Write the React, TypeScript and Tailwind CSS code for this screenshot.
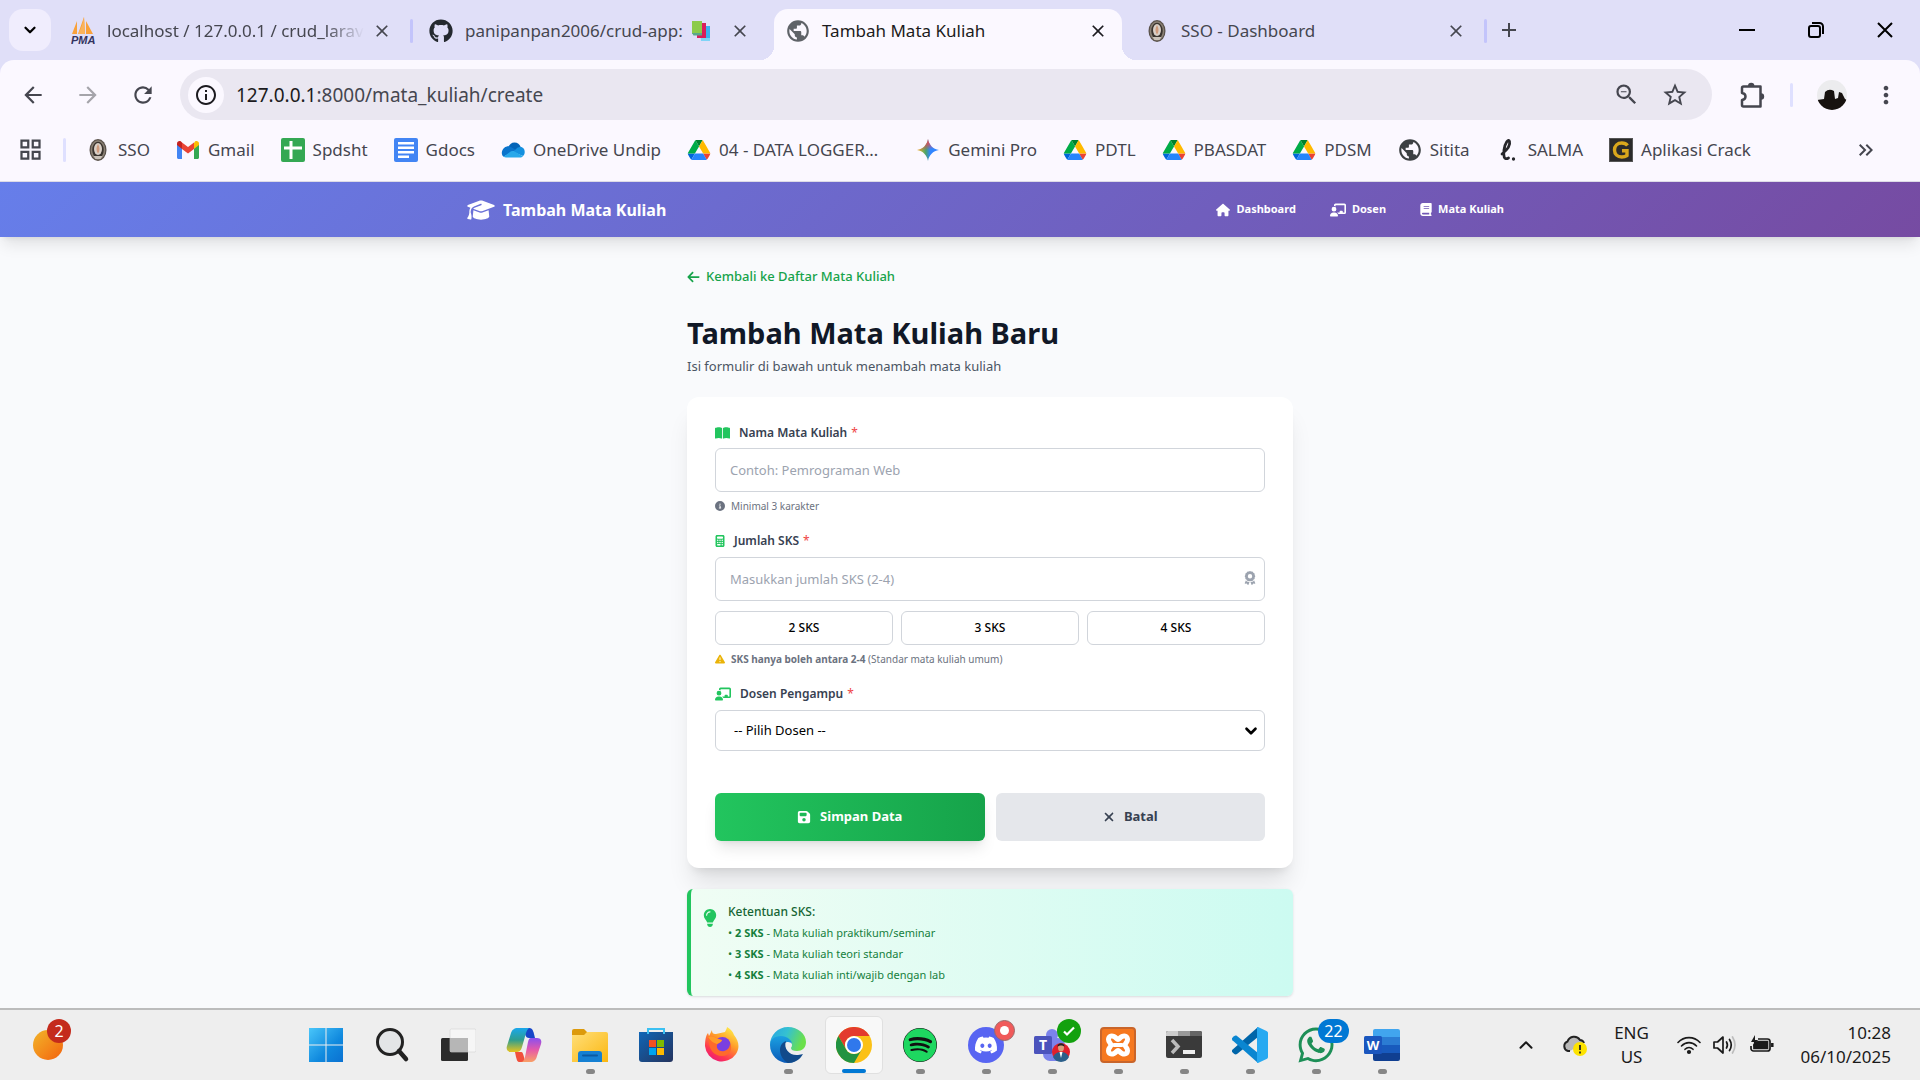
import { useId, useState } from "react";
import type { ReactNode } from "react";
import {
  FaArrowLeft,
  FaAward,
  FaBook,
  FaBookOpen,
  FaCalculator,
  FaChalkboardUser,
  FaCircleInfo,
  FaDiscord,
  FaFloppyDisk,
  FaGithub,
  FaGraduationCap,
  FaHouse,
  FaLightbulb,
  FaSpotify,
  FaTriangleExclamation,
  FaWhatsapp,
  FaXmark,
} from "react-icons/fa6";
import {
  MdAdd,
  MdArrowBack,
  MdArrowForward,
  MdClose,
  MdInfoOutline,
  MdKeyboardDoubleArrowRight,
  MdMoreVert,
  MdOutlineGridView,
  MdOutlineZoomOut,
  MdPublic,
  MdRefresh,
  MdStarBorder,
} from "react-icons/md";
import { SiXampp } from "react-icons/si";
import { ChevronDown, ChevronUp } from "lucide-react";

/* ---------- Favicons ---------- */

function PmaIcon() {
  return (
    <svg viewBox="0 0 24 28" className="h-7 w-6">
      <path d="M1 17 6 4v13zM7 17 13 0l1 17zM15 17 15 4l7 13z" fill="#f9a13a" />
      <path d="M13 0c-1 6-3 12-6 17h7z" fill="#fbb45c" />
      <text x="0" y="27" fontSize="11" fontWeight="700" fontStyle="italic" fontFamily="Liberation Sans, sans-serif" fill="#33335f">
        PMA
      </text>
    </svg>
  );
}

function CrestIcon() {
  return (
    <svg viewBox="0 0 20 24" className="h-6 w-5">
      <ellipse cx="10" cy="12" rx="8.500" ry="11" fill="#5a524b" />
      <ellipse cx="10" cy="12" rx="6.500" ry="9" fill="#3a342f" stroke="#8b8175" strokeWidth="1.500" />
      <ellipse cx="10" cy="11" rx="4" ry="6" fill="#d9cfc6" />
      <path d="M10 6c2 3 2 7 0 9.500-2-2.500-2-6.500 0-9.500z" fill="#cf9a7c" />
      <path d="M5.500 18h9l-2 3h-5z" fill="#c9c1b8" />
    </svg>
  );
}

function BooksIcon() {
  return (
    <svg viewBox="0 0 20 22" className="h-[22px] w-5 shrink-0">
      <path d="M9 6h10v15h-9z" fill="#3bb2f0" />
      <path d="M10 18h9v3h-9z" fill="#7fd4f7" />
      <path d="M6 3h9v15H6z" fill="#d91e5b" />
      <path d="M1 1h10v13H1z" fill="#8ccb4a" />
      <path d="M1 13h10v2.500H2.500z" fill="#5aa88a" />
    </svg>
  );
}

function GmailIcon() {
  return (
    <svg viewBox="0 0 24 20" className="h-5 w-6">
      <path d="M1 4v13.500c0 .8.700 1.500 1.500 1.500H6V8z" fill="#4285f4" />
      <path d="M23 4v13.500c0 .8-.7 1.500-1.500 1.500H18V8z" fill="#34a853" />
      <path d="M18 3v6l5-4V3.500C23 1.500 20.700.4 19 1.600z" fill="#fbbc04" />
      <path d="M6 9V2.500l6 4.500 6-4.500V9l-6 4.600z" fill="#ea4335" />
      <path d="M1 3.500V5l5 4V2.500L5 1.600C3.300.4 1 1.500 1 3.500z" fill="#c5221f" />
    </svg>
  );
}

function SheetsIcon() {
  return (
    <svg viewBox="0 0 24 24" className="h-6 w-6">
      <rect width="24" height="24" rx="2" fill="#34a853" />
      <path d="M8.500 3h3v5.500H21v3h-9.500V21h-3v-9.500H3v-3h5.500z" fill="#fff" />
    </svg>
  );
}

function DocsIcon() {
  return (
    <svg viewBox="0 0 24 24" className="h-6 w-6">
      <rect width="24" height="24" rx="2" fill="#4285f4" />
      <path d="M4 4h16v2.500H4zM4 8.500h16V11H4zM4 13h16v2.500H4zM4 17.500h11V20H4z" fill="#fff" />
    </svg>
  );
}

function OneDriveIcon() {
  return (
    <svg viewBox="0 0 24 16" className="h-4 w-6">
      <path d="M7 6C8 2.500 10.500.5 13.500.5c3 0 5.300 1.800 6.200 4.600L14 9z" fill="#0364b8" />
      <path d="M9 4.500C5.500 3.500 1.800 6 1 9.500c-.6 2 .2 4 1.500 5.200L15 8z" fill="#0a74cc" />
      <path d="M19.500 5c-2 0-3.700.8-5 2.500L12 10l10 4c3-2.600 2-9-2.500-9z" fill="#1490df" />
      <path d="M2.500 14.700C3.300 15.300 4.200 15.500 5 15.500h14c1.200 0 2.200-.5 3-1.300L13 9.300c-1.300-.5-3-.3-4 .6z" fill="#28a8ea" />
    </svg>
  );
}

function DriveIcon() {
  return (
    <svg viewBox="0 0 87 78" className="h-5 w-6">
      <path d="m6.600 66.850 3.850 6.650c.8 1.400 1.950 2.500 3.300 3.300l13.750-23.800h-27.500c0 1.550.4 3.100 1.200 4.500z" fill="#0066da" />
      <path d="m43.650 25-13.750-23.800c-1.350.8-2.500 1.900-3.300 3.300l-25.400 44a9.060 9.060 0 0 0 -1.200 4.500h27.500z" fill="#00ac47" />
      <path d="m73.550 76.800c1.350-.8 2.500-1.900 3.300-3.300l1.600-2.750 7.650-13.250c.8-1.400 1.200-2.950 1.200-4.500h-27.500l5.850 11.500z" fill="#ea4335" />
      <path d="m43.650 25 13.750-23.800c-1.350-.8-2.900-1.200-4.500-1.200h-18.500c-1.600 0-3.150.45-4.500 1.200z" fill="#00832d" />
      <path d="m59.800 53h-32.300l-13.750 23.800c1.350.8 2.900 1.200 4.500 1.200h50.800c1.600 0 3.150-.45 4.500-1.200z" fill="#2684fc" />
      <path d="m73.400 26.500-12.700-22c-.8-1.400-1.950-2.500-3.300-3.300l-13.750 23.800 16.150 28h27.450c0-1.550-.4-3.100-1.200-4.500z" fill="#ffba00" />
    </svg>
  );
}

function GeminiIcon() {
  return (
    <svg viewBox="0 0 24 24" className="h-6 w-6">
      <defs>
        <linearGradient id="gem" x1="0" y1="0.500" x2="1" y2="0.500">
          <stop offset="0" stopColor="#f5c518" />
          <stop offset=".4" stopColor="#4aa36c" />
          <stop offset=".6" stopColor="#3186ff" />
          <stop offset="1" stopColor="#3186ff" />
        </linearGradient>
        <linearGradient id="gemTop" x1="0.400" y1="0" x2="0.500" y2="0.500">
          <stop offset="0" stopColor="#f0454a" />
          <stop offset=".5" stopColor="#f0454a" stopOpacity=".7" />
          <stop offset="1" stopColor="#f0454a" stopOpacity="0" />
        </linearGradient>
      </defs>
      <path d="M12 1c1 6 5 10 11 11-6 1-10 5-11 11-1-6-5-10-11-11 6-1 10-5 11-11z" fill="url(#gem)" />
      <path d="M12 1c1 6 5 10 11 11-6 1-10 5-11 11-1-6-5-10-11-11 6-1 10-5 11-11z" fill="url(#gemTop)" />
    </svg>
  );
}

function ScriptLIcon() {
  return (
    <svg viewBox="0 0 16 24" className="h-6 w-4" fill="none" stroke="#26262a" strokeLinecap="round">
      <path d="M2 16C7 12 10.500 7 9.500 3.500 8.500 0 5 5 4 12c-.8 6 0 10.500 4.500 8" strokeWidth="2.800" />
      <circle cx="13.500" cy="21" r=".9" fill="#26262a" strokeWidth="1.500" />
    </svg>
  );
}

function GIcon() {
  return (
    <svg viewBox="0 0 24 24" className="h-6 w-6">
      <rect x=".5" y=".5" width="23" height="23" fill="#2b2b2b" stroke="#555" />
      <path d="M18.500 7.500C17 5.500 15 5 12.800 5 8.500 5 5.500 7.800 5.500 12s3 7 7.300 7c2 0 3.800-.5 5.200-1.500V12.700h-5" fill="none" stroke="#d9a71c" strokeWidth="3.400" />
    </svg>
  );
}

function PuzzleIcon() {
  return (
    <svg viewBox="0 0 28 28" className="size-7">
      <path
        d="M5.500 5.500h17v20h-17a1.500 1.500 0 0 1-1.500-1.500V19q3.500-.5 3.500-3.500T4 12V7a1.500 1.500 0 0 1 1.500-1.500z"
        fill="none"
        stroke="currentColor"
        strokeWidth="2.500"
        strokeLinejoin="round"
      />
      <path d="M10 5a3.200 3.200 0 0 1 6.400 0zM23 12.300a3.200 3.200 0 0 1 0 6.400z" fill="currentColor" />
    </svg>
  );
}

/* ---------- Browser chrome ---------- */

type Tab = { title: string; icon: ReactNode; active?: boolean; divider?: boolean; faded?: boolean; extra?: ReactNode };

const tabs: Tab[] = [
  { title: "localhost / 127.0.0.1 / crud_larav", icon: <PmaIcon />, divider: true, faded: true },
  { title: "panipanpan2006/crud-app:", icon: <FaGithub className="size-6 text-[#24292f]" />, extra: <BooksIcon /> },
  { title: "Tambah Mata Kuliah", icon: <MdPublic className="size-[26px] shrink-0 text-[#5f6368]" />, active: true },
  { title: "SSO - Dashboard", icon: <CrestIcon />, divider: true },
];

function BrowserTab({ tab }: { tab: Tab }) {
  return (
    <div className="flex h-[51px] w-[358px] min-w-0 items-stretch">
      <div
        className={
          tab.active
            ? "relative flex min-w-0 flex-1 items-center rounded-t-[14px] bg-[#fbf8ff] pr-[14px] pb-2 pl-3 text-[#1c1b20]"
            : "relative flex min-w-0 flex-1 items-center pr-[14px] pb-2 pl-[13px] text-[#45464f]"
        }
      >
        {tab.active && (
          <>
            <span className="absolute bottom-0 -left-[14px] size-[14px] bg-[radial-gradient(circle_at_0_0,transparent_14px,#fbf8ff_14px)]" />
            <span className="absolute -right-[14px] bottom-0 size-[14px] bg-[radial-gradient(circle_at_100%_0,transparent_14px,#fbf8ff_14px)]" />
          </>
        )}
        <span className="flex w-6 shrink-0 justify-center">{tab.icon}</span>
        <span
          className={
            tab.faded
              ? "ml-3 flex min-w-0 flex-1 items-center gap-2 [mask-image:linear-gradient(to_right,black_85%,transparent)]"
              : "ml-3 flex min-w-0 flex-1 items-center gap-2"
          }
        >
          <span className="text-[17px] leading-6 whitespace-nowrap">{tab.title}</span>
          {tab.extra}
        </span>
        <button type="button" aria-label={"Close " + tab.title} className="ml-2 shrink-0">
          <MdClose className="size-5" />
        </button>
      </div>
      <div className="flex w-[10px] items-center justify-center pb-2">
        {tab.divider && <span className="h-6 w-[3px] rounded bg-[#c3c4fb]" />}
      </div>
    </div>
  );
}

function TabStrip() {
  return (
    <div className="flex h-[60px] items-end bg-[#e0dff8]">
      <div className="flex h-[51px] w-[58px] shrink-0 items-start pl-[9px]">
        <button type="button" aria-label="Search tabs" className="flex h-[42px] w-[42px] items-center justify-center rounded-[14px] bg-[#f0edfd]">
          <ChevronDown className="size-[18px]" strokeWidth={3} />
        </button>
      </div>
      {tabs.map((tab) => (
        <BrowserTab key={tab.title} tab={tab} />
      ))}
      <div className="flex h-[51px] flex-1 items-center justify-between pr-[26px] pb-[10px] pl-[7px]">
        <button type="button" aria-label="New tab" className="text-[#45464f]">
          <MdAdd className="size-6" />
        </button>
        <div className="flex items-center gap-[51px]">
          <button type="button" aria-label="Minimize" className="flex size-[18px] items-center justify-center">
            <span className="h-[2px] w-4 bg-black" />
          </button>
          <button type="button" aria-label="Restore" className="flex size-[18px] items-center justify-center">
            <svg viewBox="0 0 18 18" className="size-[18px]" fill="none" stroke="#000" strokeWidth="2">
              <rect x="2" y="5" width="11" height="11" rx="2" />
              <path d="M5 2h7.500A3.500 3.500 0 0 1 16 5.500V13" />
            </svg>
          </button>
          <button type="button" aria-label="Close window" className="flex size-[18px] items-center justify-center">
            <svg viewBox="0 0 18 18" className="size-[18px]" stroke="#000" strokeWidth="2">
              <path d="M2 2l14 14M16 2L2 16" />
            </svg>
          </button>
        </div>
      </div>
    </div>
  );
}

function Toolbar() {
  return (
    <div className="flex h-[69px] items-center rounded-t-[14px] bg-[#fbf8ff] pr-5 pl-5 text-[#45464f]">
      <div className="flex w-40 shrink-0 items-center gap-[29px]">
        <button type="button" aria-label="Back">
          <MdArrowBack className="size-[26px]" />
        </button>
        <button type="button" aria-label="Forward" className="text-[#a5a4aa]">
          <MdArrowForward className="size-[26px]" />
        </button>
        <button type="button" aria-label="Reload">
          <MdRefresh className="size-[26px]" />
        </button>
      </div>
      <div className="flex h-[51px] flex-1 items-center rounded-full bg-[#eae7f1] pr-[23px] pl-2">
        <button type="button" aria-label="Site information" className="flex size-9 items-center justify-center rounded-full bg-[#fbf8ff] text-[#1c1b20]">
          <MdInfoOutline className="size-6" />
        </button>
        <span className="ml-3 flex-1 text-[19px] leading-7">
          <span className="text-[#1c1b20]">127.0.0.1</span>:8000/mata_kuliah/create
        </span>
        <button type="button" aria-label="Zoom">
          <MdOutlineZoomOut className="size-[27px]" />
        </button>
        <button type="button" aria-label="Bookmark" className="ml-[21px]">
          <MdStarBorder className="size-[28px]" />
        </button>
      </div>
      <div className="flex items-center pl-[26px]">
        <button type="button" aria-label="Extensions">
          <PuzzleIcon />
        </button>
        <span className="ml-6 h-6 w-[3px] rounded bg-[#dfe0ff]" />
        <button type="button" aria-label="Profile" className="ml-6">
          <svg viewBox="0 0 30 30" className="size-[30px]">
            <clipPath id="avatar">
              <circle cx="15" cy="15" r="15" />
            </clipPath>
            <g clipPath="url(#avatar)">
              <rect width="30" height="30" fill="#ececee" />
              <path d="M0 20l7-1 1-7q4-4 9-1l1 8 3-1 1-6 3 1 3 6 2 1v12H0z" fill="#17120f" />
            </g>
          </svg>
        </button>
        <button type="button" aria-label="Menu" className="ml-[25px]">
          <MdMoreVert className="size-[28px]" />
        </button>
      </div>
    </div>
  );
}

const bookmarks: { label: string; icon: ReactNode; long?: boolean }[] = [
  { label: "SSO", icon: <CrestIcon /> },
  { label: "Gmail", icon: <GmailIcon /> },
  { label: "Spdsht", icon: <SheetsIcon /> },
  { label: "Gdocs", icon: <DocsIcon /> },
  { label: "OneDrive Undip", icon: <OneDriveIcon /> },
  { label: "04 - DATA LOGGER…", icon: <DriveIcon />, long: true },
  { label: "Gemini Pro", icon: <GeminiIcon /> },
  { label: "PDTL", icon: <DriveIcon /> },
  { label: "PBASDAT", icon: <DriveIcon /> },
  { label: "PDSM", icon: <DriveIcon /> },
  { label: "Sitita", icon: <MdPublic className="size-[26px] shrink-0 text-[#3c4043]" /> },
  { label: "SALMA", icon: <ScriptLIcon /> },
  { label: "Aplikasi Crack", icon: <GIcon /> },
];

function BookmarksBar() {
  return (
    <div className="flex h-[53px] items-center border-b border-[#dddbe6] bg-[#fbf8ff] pr-[42px] pb-[11px] pl-[17px] text-[#45464f]">
      <button type="button" aria-label="All bookmarks">
        <MdOutlineGridView className="size-[27px]" />
      </button>
      <span className="ml-[19px] h-6 w-[3px] rounded bg-[#dfe0ff]" />
      <nav aria-label="Bookmarks" className="ml-5 flex flex-1 items-center gap-[26px]">
        {bookmarks.map((b) => (
          <a
            key={b.label}
            href="#"
            className={
              b.long
                ? "flex items-center gap-2 pr-3 text-[17px] leading-6 whitespace-nowrap"
                : "flex items-center gap-2 text-[17px] leading-6 whitespace-nowrap"
            }
          >
            <span className="flex w-6 justify-center">{b.icon}</span>
            {b.label}
          </a>
        ))}
      </nav>
      <button type="button" aria-label="More bookmarks">
        <MdKeyboardDoubleArrowRight className="size-6" />
      </button>
    </div>
  );
}

/* ---------- Web page ---------- */

function SiteNav() {
  return (
    <header className="relative bg-[linear-gradient(135deg,#667eea_0%,#764ba2_100%)] pl-[51px] text-white shadow-lg">
      <div className="mx-auto flex h-[55px] max-w-[1037px] items-center justify-between">
        <div className="flex items-center gap-2">
          <FaGraduationCap className="h-[22px] w-7" />
          <span className="text-base font-bold">Tambah Mata Kuliah</span>
        </div>
        <nav className="flex items-center gap-[34px] text-[11px] font-bold">
          <a href="#" className="flex items-center gap-[6px]">
            <FaHouse className="size-[14px]" />
            Dashboard
          </a>
          <a href="#" className="flex items-center gap-[6px]">
            <FaChalkboardUser className="h-[14px] w-4" />
            Dosen
          </a>
          <a href="#" className="flex items-center gap-[6px]">
            <FaBook className="h-[13px] w-3" />
            Mata Kuliah
          </a>
        </nav>
      </div>
    </header>
  );
}

function FieldLabel({ htmlFor, icon, children }: { htmlFor: string; icon: ReactNode; children: ReactNode }) {
  return (
    <label htmlFor={htmlFor} className="flex h-4 items-center text-xs font-semibold text-[#374151]">
      <span className="mr-[9px] text-[#22c55e]">{icon}</span>
      {children}
      <span className="ml-1 font-normal text-[#ef4444]">*</span>
    </label>
  );
}

const sksOptions = [2, 3, 4];

const sksRules = [
  { sks: "2 SKS", text: "Mata kuliah praktikum/seminar" },
  { sks: "3 SKS", text: "Mata kuliah teori standar" },
  { sks: "4 SKS", text: "Mata kuliah inti/wajib dengan lab" },
];

function CourseForm() {
  const id = useId();
  const [sks, setSks] = useState("");
  return (
    <form
      className="rounded-xl bg-white px-7 pt-7 pb-[27px] shadow-xl"
      onSubmit={(e) => e.preventDefault()}
    >
      <FieldLabel htmlFor={id + "nama"} icon={<FaBookOpen className="h-[14px] w-[15px]" />}>
        Nama Mata Kuliah
      </FieldLabel>
      <input
        id={id + "nama"}
        type="text"
        placeholder="Contoh: Pemrograman Web"
        className="mt-[7px] block h-11 w-full rounded-md border border-[#d1d5db] px-[14px] text-[13px] placeholder:text-[#9ca3af]"
      />
      <p className="mt-[6px] flex h-4 items-center gap-[6px] text-[10px] text-[#6b7280]">
        <FaCircleInfo className="size-[10px]" />
        Minimal 3 karakter
      </p>

      <div className="mt-[19px]">
        <FieldLabel htmlFor={id + "sks"} icon={<FaCalculator className="h-3 w-[10px]" />}>
          Jumlah SKS
        </FieldLabel>
        <div className="relative mt-2">
          <input
            id={id + "sks"}
            type="text"
            inputMode="numeric"
            value={sks}
            onChange={(e) => setSks(e.target.value)}
            placeholder="Masukkan jumlah SKS (2-4)"
            className="block h-11 w-full rounded-md border border-[#d1d5db] px-[14px] text-[13px] placeholder:text-[#9ca3af]"
          />
          <FaAward className="absolute top-[14px] right-[9px] h-[14px] w-3 text-[#9ca3af]" />
        </div>
        <div className="mt-[10px] grid grid-cols-3 gap-2">
          {sksOptions.map((n) => (
            <button
              key={n}
              type="button"
              onClick={() => setSks(String(n))}
              className="h-[34px] rounded-md border border-[#d1d5db] text-xs font-medium text-black"
            >
              {n} SKS
            </button>
          ))}
        </div>
        <p className="mt-[6px] flex h-4 items-center text-[10px] text-[#6b7280]">
          <FaTriangleExclamation className="mr-[6px] size-[10px] text-[#eab308]" />
          <span>
            <strong>SKS hanya boleh antara 2-4</strong> (Standar mata kuliah umum)
          </span>
        </p>
      </div>

      <div className="mt-[19px]">
        <FieldLabel htmlFor={id + "dosen"} icon={<FaChalkboardUser className="h-[14px] w-4" />}>
          Dosen Pengampu
        </FieldLabel>
        <div className="relative mt-2">
          <select
            id={id + "dosen"}
            className="block h-[41px] w-full appearance-none rounded-md border border-[#d1d5db] bg-white px-[18px] text-[13px] text-black"
          >
            <option>-- Pilih Dosen --</option>
          </select>
          <ChevronDown className="pointer-events-none absolute top-3 right-[5px] size-[18px]" strokeWidth={3.500} />
        </div>
      </div>

      <div className="mt-[42px] grid grid-cols-2 gap-[11px]">
        <button
          type="submit"
          className="flex h-12 items-center justify-center gap-[9px] rounded-md bg-linear-to-r from-[#22c55e] to-[#16a34a] text-[13px] font-bold text-white shadow-lg"
        >
          <FaFloppyDisk className="size-[14px]" />
          Simpan Data
        </button>
        <button
          type="button"
          className="flex h-12 items-center justify-center gap-[9px] rounded-md bg-[#e5e7eb] text-[13px] font-bold text-[#374151]"
        >
          <FaXmark className="h-[14px] w-3" />
          Batal
        </button>
      </div>
    </form>
  );
}

function SitePage() {
  return (
    <div className="flex-1 overflow-hidden bg-[#f9fafc]">
      <SiteNav />
      <div className="pl-[60px]">
        <main className="mx-auto flex max-w-[606px] flex-col pt-[31px] pb-[11px]">
          <a href="#" className="flex h-[18px] items-center gap-[6px] text-[13px] font-medium text-[#16a34a]">
            <FaArrowLeft className="h-[14px] w-[13px]" />
            Kembali ke Daftar Mata Kuliah
          </a>
          <h1 className="mt-[27px] text-[29px] leading-10 font-bold text-[#111827]">Tambah Mata Kuliah Baru</h1>
          <p className="mt-1 mb-[22px] text-[13px] leading-[18px] text-[#4b5563]">
            Isi formulir di bawah untuk menambah mata kuliah
          </p>
          <CourseForm />
          <section className="mt-[21px] flex rounded-md border-l-4 border-[#22c55e] bg-linear-to-r from-[#f0fdf4] to-[#ccfbf1] px-3 pt-3 pb-[11px] shadow">
            <FaLightbulb className="mt-2 h-[18px] w-[14px] shrink-0 text-[#22c55e]" />
            <div className="ml-[11px] text-[11px] leading-[21px] text-[#15803d]">
              <h2 className="text-xs leading-[21px] font-medium text-[#166534]">Ketentuan SKS:</h2>
              <ul>
                {sksRules.map((r) => (
                  <li key={r.sks}>
                    • <strong>{r.sks}</strong> - {r.text}
                  </li>
                ))}
              </ul>
            </div>
          </section>
        </main>
      </div>
    </div>
  );
}

/* ---------- Taskbar ---------- */

function WindowsIcon() {
  return (
    <svg viewBox="0 0 36 36" className="size-9">
      <defs>
        <linearGradient id="win" gradientUnits="userSpaceOnUse" x1="0" y1="0" x2="36" y2="36">
          <stop offset="0" stopColor="#4cc9fb" />
          <stop offset=".6" stopColor="#1089de" />
          <stop offset="1" stopColor="#0a6fd0" />
        </linearGradient>
      </defs>
      <path d="M1 1h16.500v16.500H1zM18.500 1H35v16.500H18.500zM1 18.500h16.500V35H1zM18.500 18.500H35V35H18.500z" fill="url(#win)" />
    </svg>
  );
}

function SearchIcon() {
  return (
    <svg viewBox="0 0 36 36" className="size-9" fill="none" stroke="#222">
      <circle cx="16" cy="15" r="12.500" strokeWidth="3" fill="#e3e5e7" />
      <path d="M25 24l7 8" strokeWidth="4.500" strokeLinecap="round" />
    </svg>
  );
}

function TaskViewIcon() {
  return (
    <svg viewBox="0 0 36 36" className="size-9">
      <rect x="1" y="11" width="27" height="23" rx="1.500" fill="#2b2b2b" />
      <rect x="10" y="2" width="26" height="23" rx="1.500" fill="#f6f6f6" stroke="#d4d4d4" strokeWidth=".6" />
      <path d="M10 11h18v14H10z" fill="#b6b6b6" />
    </svg>
  );
}

function CopilotIcon() {
  return (
    <svg viewBox="0 0 36 36" className="size-9">
      <defs>
        <linearGradient id="copL" x1="0" y1="0" x2="0" y2="1">
          <stop offset="0" stopColor="#1aa7ec" />
          <stop offset=".5" stopColor="#2f9e8f" />
          <stop offset="1" stopColor="#e9c41c" />
        </linearGradient>
        <linearGradient id="copR" x1="0" y1="0" x2="0" y2="1">
          <stop offset="0" stopColor="#8a4ff0" />
          <stop offset=".5" stopColor="#e65aa8" />
          <stop offset="1" stopColor="#f9a066" />
        </linearGradient>
      </defs>
      <path d="M17 1h6c3 0 4 2 5 6l1 4h-6c-2 0-3-1-4-4z" fill="#1746c8" />
      <path d="M9 25h6c2 0 2 2 3 5l1 5h-5c-3 0-3-2-4-5z" fill="#f1503c" />
      <path d="M12 1h12c-2 0-3 2-4 5l-4 14c-1 4-3 5-6 5H5c-4 0-5-3-4-6L5 6c1-3 3-5 7-5z" fill="url(#copL)" />
      <path d="M25 11h6c4 0 5 3 4 6l-4 12c-1 4-3 6-7 6h-9c2 0 3-2 4-5l3-15c1-3 1-4 3-4z" fill="url(#copR)" />
    </svg>
  );
}

function ExplorerIcon() {
  return (
    <svg viewBox="0 0 36 36" className="size-9">
      <defs>
        <linearGradient id="fold" x1="0" y1="0" x2="1" y2="1">
          <stop offset="0" stopColor="#ffdf7a" />
          <stop offset="1" stopColor="#fbb710" />
        </linearGradient>
      </defs>
      <path d="M0 4a2 2 0 0 1 2-2h10l4 4v6H0z" fill="#dc9a0c" />
      <path d="M0 8h12l3-3h19a2 2 0 0 1 2 2v28H0z" fill="url(#fold)" />
      <path d="M6 35V27a3 3 0 0 1 3-3h18a3 3 0 0 1 3 3v8z" fill="#1580d3" />
      <path d="M11 28.500h14" stroke="#0b5aa3" strokeWidth="2" strokeLinecap="round" />
    </svg>
  );
}

function StoreIcon() {
  return (
    <svg viewBox="0 0 36 36" className="size-9">
      <defs>
        <linearGradient id="store" x1="0" y1="0" x2="1" y2="1">
          <stop offset="0" stopColor="#0f66b7" />
          <stop offset="1" stopColor="#25335d" />
        </linearGradient>
      </defs>
      <path d="M1 5h34v27a3 3 0 0 1-3 3H4a3 3 0 0 1-3-3z" fill="url(#store)" />
      <path d="M10 7V2h16v5" fill="none" stroke="#3bc0f2" strokeWidth="2" />
      <path d="M11 13h7v7h-7z" fill="#f25022" />
      <path d="M19 13h7v7h-7z" fill="#7fba00" />
      <path d="M11 21h7v7h-7z" fill="#00a4ef" />
      <path d="M19 21h7v7h-7z" fill="#ffb900" />
    </svg>
  );
}

function FirefoxIcon() {
  return (
    <svg viewBox="0 0 36 36" className="size-9">
      <defs>
        <linearGradient id="ff" x1=".8" y1="0" x2=".2" y2="1">
          <stop offset="0" stopColor="#fff04a" />
          <stop offset=".4" stopColor="#ff9b28" />
          <stop offset=".75" stopColor="#ff3750" />
          <stop offset="1" stopColor="#e8167e" />
        </linearGradient>
      </defs>
      <path d="M21 5c1-2 2-4 2-5 4 2 6 5 7 8 5 6 6 13 2 19A17 17 0 0 1 1 19C1 13 2 8 4 6l1 3 3-6c0 3 1 4 4 4 3-1 6-1 9-2z" fill="url(#ff)" />
      <circle cx="18.500" cy="18" r="8" fill="#7a3fe0" />
      <path d="M4 10c4-2 7 0 10 2l4 1c-1 3-4 3-5 5-1 4 3 7 7 6 4-1 6-4 6-8 3 6 0 13-8 13S5 22 5 15z" fill="#ff6a2a" />
      <path d="M4 10c4-2 7 0 10 2l4 1c-1 3-4 3-5 4-4-1-6-3-9-7z" fill="#ff9b28" />
    </svg>
  );
}

function EdgeIcon() {
  return (
    <svg viewBox="0 0 36 36" className="size-9">
      <defs>
        <linearGradient id="edgeTop" x1="0" y1="0" x2="1" y2=".3">
          <stop offset="0" stopColor="#26a4e4" />
          <stop offset=".5" stopColor="#35c1d1" />
          <stop offset="1" stopColor="#6be04b" />
        </linearGradient>
        <linearGradient id="edgeLeft" x1="0" y1="0" x2="0" y2="1">
          <stop offset="0" stopColor="#1ba0e1" />
          <stop offset="1" stopColor="#0a5ab8" />
        </linearGradient>
      </defs>
      <path d="M0 18C0 8 8 0 18 0s18 7 18 15c0 6-4 9-9 9-4 0-6-1-6-3 0-1 1-1 1-3 0-4-4-8-10-8C6 10 1 13 0 18z" fill="url(#edgeTop)" />
      <path d="M0 18c0-5 4-9 11-9 6 0 11 4 11 8-2-3-9-3-9 4 0 7 6 12 12 13-2 1-4 2-7 2C8 36 0 28 0 18z" fill="url(#edgeLeft)" />
      <path d="M10 23c0-5 3-8 6-9-3 8 4 15 12 14 2 0 4-1 5-1-3 6-9 9-15 9-4-2-8-7-8-13z" fill="#114a8b" />
    </svg>
  );
}

function ChromeIcon() {
  return (
    <svg viewBox="0 0 36 36" className="size-9">
      <circle cx="18" cy="18" r="18" fill="#fbc116" />
      <path d="M2.400 9A18 18 0 0 1 33.600 9H18a9 9 0 0 0-7.800 13.500z" fill="#e33b2e" />
      <path d="M2.400 9A18 18 0 0 0 18 36l7.800-13.500A9 9 0 0 1 10.200 22.500z" fill="#229342" />
      <circle cx="18" cy="18" r="9" fill="#fff" />
      <circle cx="18" cy="18" r="7" fill="#3078ec" />
    </svg>
  );
}

function SpotifyIcon() {
  return (
    <span className="flex size-[34px] items-center justify-center rounded-full bg-[#111]">
      <FaSpotify className="size-[34px] text-[#1ed760]" />
    </span>
  );
}

function DiscordIcon() {
  return (
    <span className="flex size-9 items-center justify-center rounded-full bg-[#5865f2]">
      <FaDiscord className="size-6 text-white" />
    </span>
  );
}

function TeamsIcon() {
  return (
    <svg viewBox="0 0 36 36" className="size-9">
      <circle cx="18" cy="8" r="6" fill="#7b83eb" />
      <rect x="9" y="11" width="22" height="23" rx="7" fill="#7b83eb" />
      <rect x="0" y="9" width="18" height="18" rx="1.500" fill="#4b53bc" />
      <text x="9" y="23" textAnchor="middle" fontSize="14" fontWeight="700" fontFamily="Noto Sans, sans-serif" fill="#fff">
        T
      </text>
      <circle cx="27" cy="25" r="9" fill="#e0202b" />
      <path d="M19 30c2-4 5-5 8-5s6 1 8 5a9 9 0 0 1-16 0z" fill="#2b5f8a" />
      <path d="M25.500 25h3l-1.500 6z" fill="#fff" />
      <ellipse cx="27" cy="20.500" rx="3" ry="4" fill="#d9a07c" />
      <path d="M23.500 20c-.5-5 7.500-5 7 0-1-2-6-2-7 0z" fill="#222" />
    </svg>
  );
}

function XamppIcon() {
  return (
    <span className="flex size-9 items-center justify-center rounded-[4px] border-2 border-[#c9652a] bg-[#f6781f]">
      <svg viewBox="0 0 26 26" className="size-[26px]" fill="none" stroke="#fff" strokeWidth="5" strokeLinejoin="round" strokeLinecap="round">
        <path d="M9 4.500c-3-1.500-5.500 0-5.500 3S6 11 6 13s-2.500 2.500-2.500 5.500 2.500 4.500 5.500 3 2.500-3 4-3 1 1.500 4 3 5.500 0 5.500-3S20 15 20 13s2.500-2.500 2.500-5.500-2.500-4.500-5.500-3-2.500 3-4 3-1-1.500-4-3z" />
        <path d="M9 13h8" strokeWidth="4" />
      </svg>
    </span>
  );
}

function TerminalIcon() {
  return (
    <svg viewBox="0 0 36 36" className="size-9">
      <rect y="4" width="36" height="27" rx="2" fill="#3a3a3a" />
      <path d="M0 9V6a2 2 0 0 1 2-2h10v5z" fill="#ccc" />
      <path d="M12 4h12v5H12z" fill="#999" />
      <path d="M24 4h10a2 2 0 0 1 2 2v3H24z" fill="#666" />
      <path d="M6 13l6 6.500L6 26" fill="none" stroke="#bbb" strokeWidth="3.500" />
      <path d="M17 23h12v4H17z" fill="#eee" />
    </svg>
  );
}

function VsCodeIcon() {
  return (
    <svg viewBox="0 0 36 36" className="size-9">
      <path d="M26 0v10L5 27c-1 .7-2 .6-3-.2l-1.600-1.500c-.7-.7-.7-1.800 0-2.500z" fill="#0065a9" />
      <path d="M26 36V26L5 9C4 8.300 3 8.400 2 9.200L.4 10.700c-.7.7-.7 1.800 0 2.500z" fill="#0a86d1" />
      <path d="M26 0l8.500 4c1 .5 1.500 1.200 1.500 2.300v23.400c0 1.100-.5 1.800-1.500 2.300L26 36c-.5 0-1-.3-1-.8V.8c0-.5.500-.8 1-.8z" fill="#27a9f1" />
    </svg>
  );
}

function WordIcon() {
  return (
    <svg viewBox="0 0 36 36" className="size-9">
      <path d="M9 4a2 2 0 0 1 2-2h23a2 2 0 0 1 2 2v6H9z" fill="#41a5ee" />
      <path d="M9 10h27v8H9z" fill="#2b7cd3" />
      <path d="M9 18h27v8H9z" fill="#185abd" />
      <path d="M9 26h27v6a2 2 0 0 1-2 2H11a2 2 0 0 1-2-2z" fill="#103f91" />
      <rect y="9" width="18" height="18" rx="1.500" fill="#1a56be" />
      <text x="9" y="22.500" textAnchor="middle" fontSize="13" fontWeight="700" fontFamily="Noto Sans, sans-serif" fill="#fff">
        W
      </text>
    </svg>
  );
}

type TaskbarItem = { name: string; icon: ReactNode; running?: boolean; active?: boolean; badge?: ReactNode };

const apps: TaskbarItem[] = [
  { name: "Start", icon: <WindowsIcon /> },
  { name: "Search", icon: <SearchIcon /> },
  { name: "Task View", icon: <TaskViewIcon /> },
  { name: "Copilot", icon: <CopilotIcon /> },
  { name: "File Explorer", icon: <ExplorerIcon />, running: true },
  { name: "Microsoft Store", icon: <StoreIcon /> },
  { name: "Firefox", icon: <FirefoxIcon /> },
  { name: "Edge", icon: <EdgeIcon />, running: true },
  { name: "Chrome", icon: <ChromeIcon />, active: true },
  { name: "Spotify", icon: <SpotifyIcon />, running: true },
  {
    name: "Discord",
    icon: <DiscordIcon />,
    running: true,
    badge: (
      <span className="absolute top-1 right-0 flex size-[21px] items-center justify-center rounded-full border border-[#9a6a6a] bg-[#f05a5a]">
        <span className="size-[9px] rounded-full bg-white" />
      </span>
    ),
  },
  {
    name: "Teams",
    icon: <TeamsIcon />,
    running: true,
    badge: (
      <span className="absolute top-[3px] right-0 flex size-6 items-center justify-center rounded-full bg-[#13a10e]">
        <svg viewBox="0 0 12 12" className="size-3" fill="none" stroke="#fff" strokeWidth="2.200">
          <path d="M1 6.500l3 3L11 2.500" />
        </svg>
      </span>
    ),
  },
  { name: "XAMPP", icon: <XamppIcon />, running: true },
  { name: "Terminal", icon: <TerminalIcon />, running: true },
  { name: "Visual Studio Code", icon: <VsCodeIcon />, running: true },
  {
    name: "WhatsApp",
    icon: <FaWhatsapp className="size-10 shrink-0 text-[#1d8f57]" />,
    running: true,
    badge: (
      <span className="absolute top-[3px] -right-1 flex h-6 w-[31px] items-center justify-center rounded-full bg-[#0078d4] text-base text-white">
        22
      </span>
    ),
  },
  { name: "Word", icon: <WordIcon />, running: true },
];

function TaskbarApp({ app }: { app: TaskbarItem }) {
  return (
    <button
      type="button"
      aria-label={app.name}
      className={
        app.active
          ? "relative flex h-[58px] w-[58px] flex-col items-center rounded-md border border-[#e0e0e0] bg-[#f8f8f8] pt-[10px]"
          : "relative flex h-[58px] w-[58px] flex-col items-center pt-[11px]"
      }
    >
      <span className="flex size-9 items-center justify-center">{app.icon}</span>
      {app.running && <span className="mt-[6px] h-[5px] w-[9px] rounded-full bg-[#868686]" />}
      {app.active && <span className="mt-[6px] h-[5px] w-6 rounded-full bg-[#0078d4]" />}
      {app.badge}
    </button>
  );
}

function Taskbar() {
  return (
    <footer className="flex h-[72px] items-center border-t-2 border-[#bcbcbc] bg-[#eeeeee] text-[#1a1a1a]">
      <button type="button" aria-label="Widgets" className="relative ml-[33px] flex h-[58px] w-10 items-center">
        <span className="size-[30px] rounded-full bg-linear-to-br from-[#f0b429] to-[#f2600c]" />
        <span className="absolute top-[3px] left-[14px] flex size-6 items-center justify-center rounded-full bg-[#c42b1c] text-base text-white">
          2
        </span>
      </button>
      <div className="ml-[224px] flex items-center gap-2">
        {apps.map((app) => (
          <TaskbarApp key={app.name} app={app} />
        ))}
      </div>
      <div className="ml-auto flex items-center pr-[29px] text-[17px] leading-[24px]">
        <button type="button" aria-label="Hidden icons">
          <ChevronUp className="size-[22px]" strokeWidth={2.200} />
        </button>
        <svg viewBox="0 0 26 22" className="ml-[25px] h-[22px] w-[26px]">
          <path d="M8 17H6a5 5 0 0 1-.5-9.500A7 7 0 0 1 18 6q3 .3 4 3" fill="#b9b9b9" stroke="#222" strokeWidth="2" />
          <circle cx="18" cy="15" r="7" fill="#fde300" />
          <path d="M18 11v5M18 17.500v2" stroke="#222" strokeWidth="1.800" />
        </svg>
        <span className="ml-[22px] w-[44px] text-center">
          ENG
          <br />
          US
        </span>
        <svg viewBox="0 0 24 20" className="ml-[23px] h-5 w-6" fill="none" stroke="#1a1a1a" strokeWidth="1.600" strokeLinecap="round">
          <path d="M1 7.500C7 1 17 1 23 7.500M4.500 11c4.200-4.500 10.800-4.500 15 0M8 14.300c2.300-2.400 5.700-2.400 8 0" />
          <circle cx="12" cy="17" r="1.300" fill="#1a1a1a" />
        </svg>
        <svg viewBox="0 0 24 20" className="ml-3 h-5 w-6" fill="none" stroke="#1a1a1a" strokeWidth="1.700" strokeLinecap="round" strokeLinejoin="round">
          <path d="M1 7v6h3.500L10 18V2L4.500 7zM13.500 7q1.800 3 0 6M16.500 4.500q3.500 5.500 0 11" />
          <path d="M19.500 2q5 8 0 16" stroke="#bdbdbd" />
        </svg>
        <svg viewBox="0 0 24 20" className="ml-[13px] h-5 w-6" fill="none" stroke="#1a1a1a" strokeWidth="1.700">
          <path d="M8 4h9.500A2.500 2.500 0 0 1 20 6.500v7a2.500 2.500 0 0 1-2.500 2.500h-14A2.500 2.500 0 0 1 1 13.500V11" />
          <path d="M4 13.500V10l4-3.500h9.500v7z" fill="#1a1a1a" />
          <path d="M5 0L1 7h3l-1 5 5-7H5z" fill="#1a1a1a" stroke="none" />
          <path d="M22.300 8v4" strokeWidth="2.500" />
        </svg>
        <span className="ml-[27px] text-right">
          10:28
          <br />
          06/10/2025
        </span>
      </div>
    </footer>
  );
}

export default function App() {
  return (
    <div className="flex min-h-screen flex-col bg-[#e0dff8] font-['Noto_Sans','Open_Sans',sans-serif]">
      <TabStrip />
      <Toolbar />
      <BookmarksBar />
      <SitePage />
      <Taskbar />
    </div>
  );
}
